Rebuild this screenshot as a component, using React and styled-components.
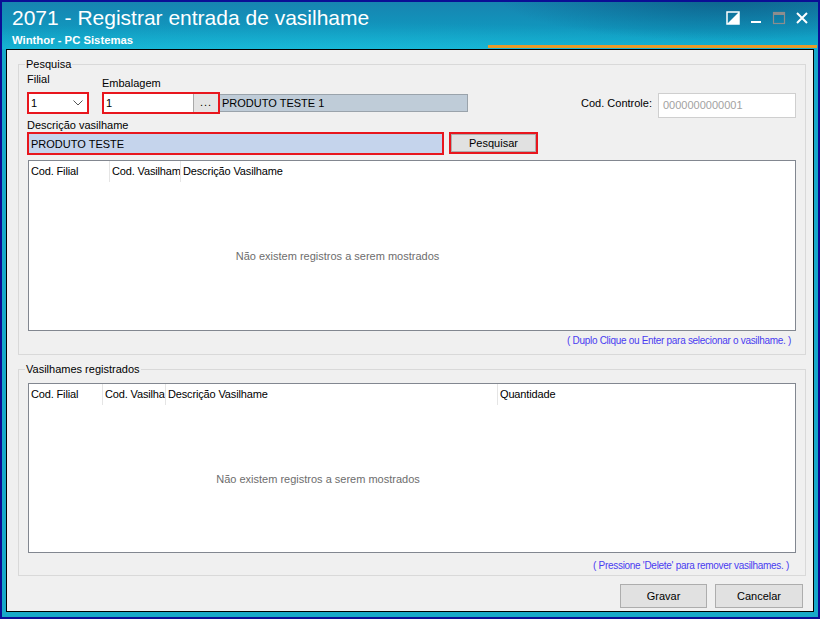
import React from "react";
import styled, { createGlobalStyle } from "styled-components";

const GlobalStyle = createGlobalStyle`
  html, body {
    margin: 0;
    padding: 0;
    background: #0b0e95;
  }
  body {
    font-family: "Liberation Sans", Arial, sans-serif;
    font-size: 11px;
    color: #000;
  }
`;

const Window = styled.div`
  width: 820px;
  height: 619px;
  box-sizing: border-box;
  border: 2px solid #0b0e95;
  background: #17a9c9;
  display: flex;
  flex-direction: column;
`;

const TitleBar = styled.div`
  position: relative;
  height: 47px;
  flex: none;
  box-sizing: border-box;
  padding: 4px 9px 0 10px;
  display: flex;
  justify-content: space-between;
  background:
    radial-gradient(ellipse 300px 60px at 720px -6px, rgba(4, 70, 110, 0.55), transparent 75%),
    radial-gradient(ellipse 700px 40px at 300px 52px, rgba(40, 210, 235, 0.35), transparent 80%),
    linear-gradient(180deg, #1784b0 0%, #1196bd 55%, #12aecf 100%);

  &::after {
    content: "";
    position: absolute;
    right: 1px;
    bottom: 1px;
    width: 329px;
    height: 3px;
    background: #e79a2a;
  }
`;

const TitleText = styled.div`
  display: flex;
  flex-direction: column;
  color: #fff;
`;

const Title = styled.div`
  font-size: 21px;
  line-height: 24px;
`;

const Subtitle = styled.div`
  margin-top: 4px;
  font-size: 11.3px;
  line-height: 13px;
  font-weight: bold;
`;

const Controls = styled.div`
  display: flex;
  gap: 9px;
  margin-top: 5px;
`;

const Body = styled.div`
  flex: 1;
  display: flex;
  padding: 0 4px 5px 4px;
  min-height: 0;
`;

const Client = styled.div`
  flex: 1;
  border: 1px solid #000;
  background: #f0f0f0;
  display: flex;
  flex-direction: column;
`;

const Group = styled.fieldset`
  margin: ${(p) => p.$top}px 7px 0 11px;
  padding: 0;
  border: 1px solid #d9d9d9;
  min-width: 0;
`;

const Legend = styled.legend`
  margin-left: 6px;
  padding: 0 1px;
  font-size: 11px;
  line-height: 14px;
`;

const Content = styled.div`
  padding: ${(p) => p.$pad};
`;

const Row = styled.div`
  display: flex;
  align-items: flex-end;
`;

const Col = styled.div`
  display: flex;
  flex-direction: column;
  margin-left: ${(p) => p.$ml || 0}px;
`;

const Label = styled.div`
  line-height: 14px;
  margin-bottom: ${(p) => p.$mb || 0}px;
  margin-top: ${(p) => p.$mt || 0}px;
`;

const Highlight = styled.div`
  box-sizing: border-box;
  width: ${(p) => p.$w}px;
  height: ${(p) => p.$h}px;
  border: 2px solid #e8161d;
  background: ${(p) => p.$bg || "#fff"};
  display: flex;
  align-items: center;
`;

const FieldText = styled.span`
  flex: 1;
  padding-left: ${(p) => p.$pl || 2}px;
  white-space: nowrap;
`;

const Chevron = styled.svg`
  margin-right: 4px;
`;

const DotsButton = styled.div`
  width: 25px;
  align-self: stretch;
  box-sizing: border-box;
  border-left: 1px solid #a9a9a9;
  background: #e4e4e4;
  text-align: center;
  line-height: 17px;
  letter-spacing: 1px;
`;

const ReadOnly = styled.div`
  box-sizing: border-box;
  width: 248px;
  height: 18px;
  margin-bottom: 2px;
  border: 1px solid #9aa3ab;
  border-left: none;
  background: #bfccd8;
  padding-left: 2px;
  line-height: 16px;
`;

const Spacer = styled.div`
  flex: 1;
`;

const CodGroup = styled.div`
  display: flex;
  align-items: center;
  gap: 6px;
  margin: 0 1px -4px 0;
`;

const CodField = styled.div`
  box-sizing: border-box;
  width: 138px;
  height: 25px;
  border: 1px solid #cfcfcf;
  background: #fff;
  color: #a2a2a2;
  padding-left: 4px;
  line-height: 23px;
`;

const FieldRow = styled.div`
  display: flex;
  gap: 5px;
`;

const Button = styled.div`
  box-sizing: border-box;
  width: ${(p) => p.$w}px;
  height: ${(p) => p.$h}px;
  background: #e1e1e1;
  border: ${(p) => (p.$marked ? "2px solid #e8161d" : "1px solid #adadad")};
  box-shadow: ${(p) => (p.$marked ? "inset 0 0 0 1px #adadad" : "none")};
  display: flex;
  align-items: center;
  justify-content: center;
`;

const GridBox = styled.div`
  box-sizing: border-box;
  margin: ${(p) => p.$mt}px 1px 0 1px;
  height: ${(p) => p.$h}px;
  border: 1px solid #828790;
  background: #fff;
  display: flex;
  flex-direction: column;
`;

const GridHeader = styled.div`
  display: flex;
  height: 21px;
  flex: none;
`;

const HeaderCell = styled.div`
  box-sizing: border-box;
  width: ${(p) => p.$w}px;
  flex: none;
  padding-left: 2px;
  line-height: 21px;
  letter-spacing: -0.15px;
  white-space: nowrap;
  overflow: hidden;
  border-right: ${(p) => (p.$last ? "none" : "1px solid #e5e5e5")};
`;

const GridBody = styled.div`
  flex: 1;
  display: flex;
  align-items: center;
`;

const EmptyMsg = styled.div`
  width: ${(p) => p.$w}px;
  text-align: center;
  color: #6d6d6d;
`;

const Hint = styled.div`
  margin-top: ${(p) => p.$mt}px;
  padding-right: ${(p) => p.$pr}px;
  text-align: right;
  font-size: 10px;
  letter-spacing: -0.3px;
  line-height: 13px;
  color: #4a3cf0;
`;

const Footer = styled.div`
  display: flex;
  justify-content: flex-end;
  gap: 8px;
  margin: 8px 10px 0 0;
`;

function Grid({ columns, message, msgWidth, height, mt }) {
  return (
    <GridBox $h={height} $mt={mt}>
      <GridHeader>
        {columns.map((c, i) => (
          <HeaderCell key={c.label} $w={c.width} $last={i === columns.length - 1}>
            {c.label}
          </HeaderCell>
        ))}
      </GridHeader>
      <GridBody>
        <EmptyMsg $w={msgWidth}>{message}</EmptyMsg>
      </GridBody>
    </GridBox>
  );
}

const pesquisaCols = [
  { label: "Cod. Filial", width: 81 },
  { label: "Cod. Vasilham", width: 71 },
  { label: "Descrição Vasilhame", width: 465 },
];

const registradosCols = [
  { label: "Cod. Filial", width: 74 },
  { label: "Cod. Vasilha", width: 63 },
  { label: "Descrição Vasilhame", width: 332 },
  { label: "Quantidade", width: 109 },
];

const emptyText = "Não existem registros a serem mostrados";

export default function App() {
  return (
    <>
      <GlobalStyle />
      <Window>
        <TitleBar>
          <TitleText>
            <Title>2071 - Registrar entrada de vasilhame</Title>
            <Subtitle>Winthor - PC Sistemas</Subtitle>
          </TitleText>
          <Controls>
            <svg width="14" height="14" viewBox="0 0 14 14">
              <rect x="1" y="1" width="12" height="12" fill="none" stroke="#fff" strokeWidth="1.5" />
              <polygon points="1,13 13,1 13,13" fill="#fff" />
            </svg>
            <svg width="14" height="14" viewBox="0 0 14 14">
              <rect x="2" y="10" width="10" height="2" fill="#fff" />
            </svg>
            <svg width="14" height="14" viewBox="0 0 14 14">
              <rect x="1.5" y="1.5" width="11" height="11" fill="none" stroke="#8d8d8d" strokeWidth="1.2" />
              <rect x="1" y="1" width="12" height="3" fill="#8d8d8d" />
            </svg>
            <svg width="14" height="14" viewBox="0 0 14 14">
              <path d="M2 2 L12 12 M12 2 L2 12" stroke="#fff" strokeWidth="2" />
            </svg>
          </Controls>
        </TitleBar>
        <Body>
          <Client>
            <Group $top={7}>
              <Legend>Pesquisa</Legend>
              <Content $pad="1px 8px 7px 8px">
                <Row>
                  <Col>
                    <Label $mb={6}>Filial</Label>
                    <Highlight $w={62} $h={22}>
                      <FieldText $pl={2}>1</FieldText>
                      <Chevron width="10" height="6" viewBox="0 0 10 6">
                        <polyline points="0.5,0.5 5,5 9.5,0.5" fill="none" stroke="#555" strokeWidth="1" />
                      </Chevron>
                    </Highlight>
                  </Col>
                  <Col $ml={13}>
                    <Label $mb={2}>Embalagem</Label>
                    <Highlight $w={118} $h={22}>
                      <FieldText $pl={2}>1</FieldText>
                      <DotsButton>...</DotsButton>
                    </Highlight>
                  </Col>
                  <ReadOnly>PRODUTO TESTE 1</ReadOnly>
                  <Spacer />
                  <CodGroup>
                    <Label $mt={-6}>Cod. Controle:</Label>
                    <CodField>0000000000001</CodField>
                  </CodGroup>
                </Row>
                <Label $mt={4}>Descrição vasilhame</Label>
                <FieldRow>
                  <Highlight $w={417} $h={23} $bg="#c5d4ec">
                    <FieldText $pl={2}>PRODUTO TESTE</FieldText>
                  </Highlight>
                  <Button $w={89} $h={22} $marked>
                    Pesquisar
                  </Button>
                </FieldRow>
                <Grid columns={pesquisaCols} message={emptyText} msgWidth={617} height={171} mt={5} />
                <Hint $mt={3} $pr={6}>
                  ( Duplo Clique ou Enter para selecionar o vasilhame. )
                </Hint>
              </Content>
            </Group>
            <Group $top={7}>
              <Legend>Vasilhames registrados</Legend>
              <Content $pad="7px 8px 3px 8px">
                <Grid columns={registradosCols} message={emptyText} msgWidth={578} height={170} mt={0} />
                <Hint $mt={6} $pr={8}>
                  ( Pressione 'Delete' para remover vasilhames. )
                </Hint>
              </Content>
            </Group>
            <Footer>
              <Button $w={87} $h={24}>Gravar</Button>
              <Button $w={88} $h={24}>Cancelar</Button>
            </Footer>
          </Client>
        </Body>
      </Window>
    </>
  );
}
